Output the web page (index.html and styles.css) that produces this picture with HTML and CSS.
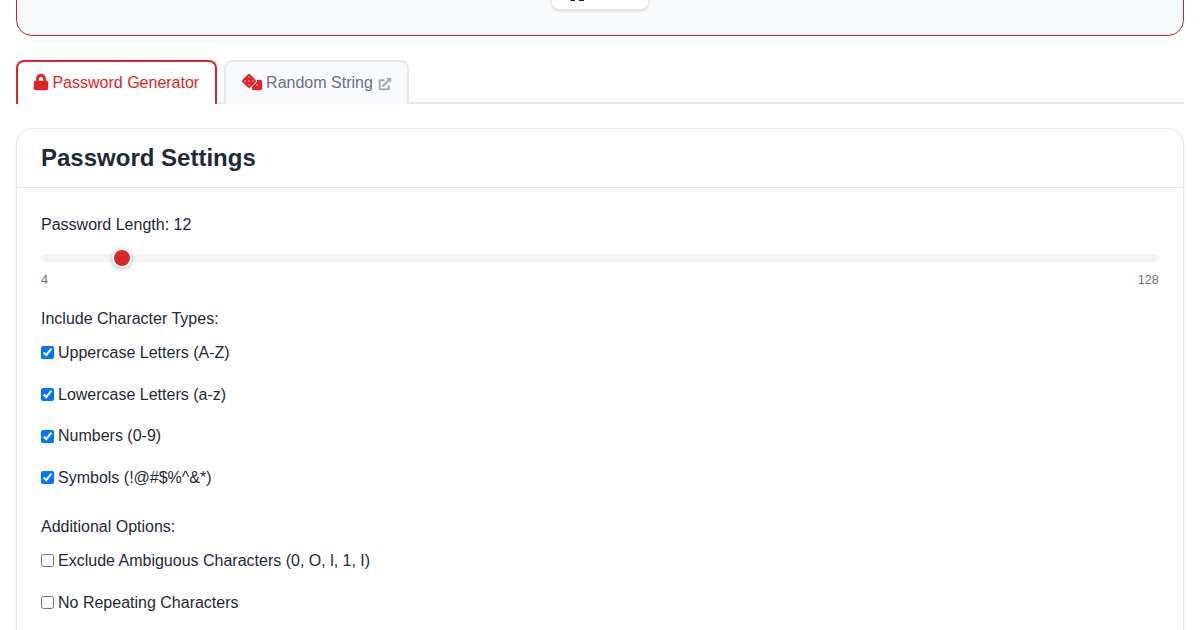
FILE: index.html
```html
<!DOCTYPE html>
<html lang="en">
<head>
<meta charset="utf-8">
<title>Password Generator</title>
<link rel="stylesheet" href="styles.css">
</head>
<body>
<section class="hero">
  <button class="hero-btn" type="button">
    <svg class="hero-icon" viewBox="0 0 14 2"><rect x="0.500" y="0" width="4.500" height="2"/><rect x="9" y="0" width="5" height="2"/></svg>
  </button>
</section>
<nav class="tabs">
  <a class="tab tab-active" href="#">
    <svg class="icon lock" viewBox="0 0 448 512"><path d="M400 224h-24v-72C376 68.200 307.800 0 224 0S72 68.200 72 152v72H48c-26.500 0-48 21.500-48 48v192c0 26.500 21.500 48 48 48h352c26.500 0 48-21.500 48-48V272c0-26.500-21.500-48-48-48zm-104 0H152v-72c0-39.700 32.300-72 72-72s72 32.300 72 72v72z"/></svg>
    <span>Password Generator</span>
  </a>
  <a class="tab" href="#">
    <svg class="icon dice" viewBox="0 0 640 512"><path d="M592 192H473.260c12.690 29.590 7.120 65.200-17 89.320L320 417.580V464c0 26.510 21.490 48 48 48h224c26.510 0 48-21.490 48-48V240c0-26.510-21.490-48-48-48zM480 376c-13.250 0-24-10.750-24-24 0-13.260 10.750-24 24-24s24 10.740 24 24c0 13.250-10.750 24-24 24zm-46.370-186.700L258.700 14.370c-19.160-19.160-50.230-19.160-69.390 0L14.370 189.300c-19.160 19.160-19.160 50.230 0 69.390L189.300 433.630c19.160 19.160 50.230 19.160 69.390 0L433.630 258.700c19.170-19.170 19.170-50.240 0-69.400zM96 248c-13.250 0-24-10.750-24-24 0-13.260 10.750-24 24-24s24 10.740 24 24c0 13.250-10.750 24-24 24zm128 128c-13.250 0-24-10.750-24-24 0-13.260 10.750-24 24-24s24 10.740 24 24c0 13.250-10.750 24-24 24zm0-128c-13.250 0-24-10.750-24-24 0-13.260 10.750-24 24-24s24 10.740 24 24c0 13.250-10.750 24-24 24zm0-128c-13.250 0-24-10.750-24-24 0-13.260 10.750-24 24-24s24 10.740 24 24c0 13.250-10.750 24-24 24zm128 128c-13.250 0-24-10.750-24-24 0-13.260 10.750-24 24-24s24 10.740 24 24c0 13.250-10.750 24-24 24z"/></svg>
    <span>Random String</span>
    <svg class="icon ext" viewBox="0 0 512 512"><path d="M432 320h-32a16 16 0 0 0-16 16v112H64V128h144a16 16 0 0 0 16-16V80a16 16 0 0 0-16-16H48a48 48 0 0 0-48 48v352a48 48 0 0 0 48 48h352a48 48 0 0 0 48-48V336a16 16 0 0 0-16-16zM488 0H360c-21.370 0-32.050 25.910-17 41l35.730 35.730L135 320.370a24 24 0 0 0 0 34L157.670 377a24 24 0 0 0 34 0l243.610-243.680L471 169c15 15 41 4.500 41-17V24a24 24 0 0 0-24-24z"/></svg>
  </a>
</nav>
<section class="card">
  <header class="card-head"><h2>Password Settings</h2></header>
  <div class="card-body">
    <label class="field-label" for="len">Password Length: 12</label>
    <input id="len" class="slider" type="range" min="4" max="128" value="12">
    <div class="range-ends"><span>4</span><span>128</span></div>
    <div class="group-title">Include Character Types:</div>
    <label class="check"><input type="checkbox" checked>Uppercase Letters (A-Z)</label>
    <label class="check"><input type="checkbox" checked>Lowercase Letters (a-z)</label>
    <label class="check"><input type="checkbox" checked>Numbers (0-9)</label>
    <label class="check"><input type="checkbox" checked>Symbols (!@#$%^&amp;*)</label>
    <div class="group-title group-second">Additional Options:</div>
    <label class="check"><input type="checkbox">Exclude Ambiguous Characters (0, O, l, 1, I)</label>
    <label class="check"><input type="checkbox">No Repeating Characters</label>
  </div>
</section>
</body>
</html>
```
FILE: styles.css
```css
* { box-sizing: border-box; }
html, body { height: 630px; overflow: hidden; }
body {
  margin: 0;
  padding: 0 16px;
  background: #fff;
  color: #1f2937;
  font-family: "Liberation Sans", Arial, sans-serif;
  font-size: 16px;
  line-height: 24px;
}
.hero {
  height: 76px;
  margin-top: -40px;
  background: #f8f9fb;
  border: 1px solid #c62828;
  border-radius: 16px;
  display: flex;
  justify-content: center;
  align-items: flex-end;
  padding-bottom: 25px;
}
.hero-btn {
  width: 98px;
  height: 40px;
  padding: 0 0 8px 18px;
  background: #fff;
  border: 1px solid #e8eaed;
  border-radius: 8px;
  box-shadow: 0 1px 2px rgba(0, 0, 0, 0.12);
  display: flex;
  justify-content: flex-start;
  align-items: flex-end;
}
.hero-icon { display: block; width: 14px; height: 2px; fill: #1f2937; }
.tabs {
  display: flex;
  gap: 6.5px;
  margin-top: 24px;
  height: 44px;
  border-bottom: 2px solid #e5e7eb;
}
.tab {
  height: 44px;
  display: flex;
  align-items: center;
  gap: 4.45px;
  padding: 0 16px;
  border: 2px solid #e5e7eb;
  border-bottom: 0;
  border-radius: 8px 8px 0 0;
  background: #f8f9fc;
  color: #6b7280;
  text-decoration: none;
}
.tab-active {
  background: #fff;
  color: #dc2626;
  border-color: #dc2626;
}
.icon { fill: #dc2626; stroke: #dc2626; stroke-width: 14px; overflow: visible; flex: none; margin-bottom: 2px; }
.lock { width: 14px; height: 16px; }
.dice { width: 20px; height: 16px; stroke-width: 8px; }
.ext { width: 12px; height: 12px; fill: #a3a9b5; stroke: #a3a9b5; stroke-width: 20px; margin: 1px 0 0 2px; }
.card {
  margin-top: 24px;
  border: 1px solid #e5e7eb;
  border-radius: 16px;
  background: #fff;
  box-shadow: 0 1px 3px rgba(0, 0, 0, 0.05);
}
.card-head {
  height: 59px;
  padding: 0 24px;
  display: flex;
  align-items: center;
  border-bottom: 1px solid #e5e7eb;
}
.card-head h2 {
  margin: 0;
  font-size: 24px;
  font-weight: 700;
  line-height: 30px;
  color: #1f2937;
}
.card-body { padding: 25px 24px 40px; }
.field-label { display: block; height: 24px; margin-bottom: 17px; }
.slider {
  display: block;
  width: 100%;
  height: 8px;
  margin: 0;
  appearance: none;
  -webkit-appearance: none;
  background: #f3f4f6;
  border-radius: 4px;
  outline: none;
}
.slider::-webkit-slider-thumb {
  -webkit-appearance: none;
  width: 20px;
  height: 20px;
  border-radius: 50%;
  background: #dc2626;
  border: 2px solid #fff;
  box-shadow: 0 1px 4px rgba(0, 0, 0, 0.3);
}
.range-ends {
  display: flex;
  justify-content: space-between;
  margin-top: 8px;
  font-size: 12.8px;
  line-height: 20px;
  color: #6b7280;
}
.group-title { margin-top: 17px; margin-bottom: 9.95px; }
.group-second { margin-top: 25.3px; }
.check {
  display: flex;
  align-items: center;
  height: 24px;
  margin-bottom: 17.6px;
}
.check input { width: 13px; height: 13px; margin: 0 4px 0 0; flex: none; }
```
